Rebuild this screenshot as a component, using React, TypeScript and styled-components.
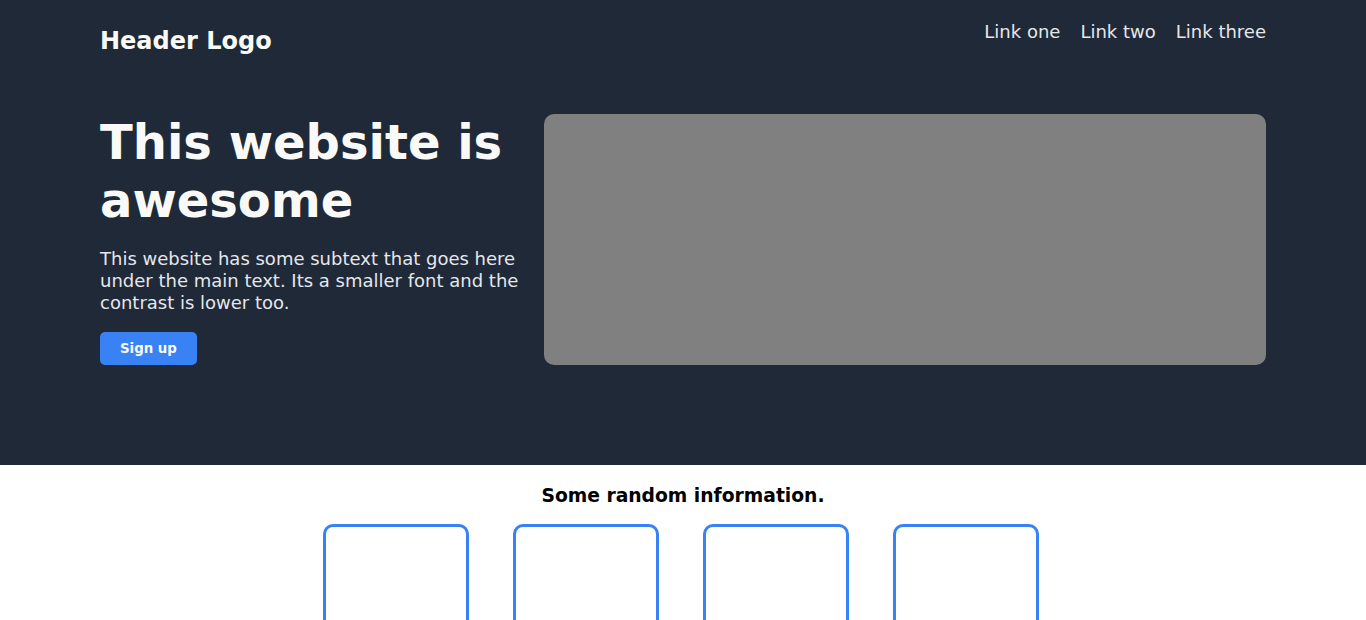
import React from "react";
import styled, { createGlobalStyle } from "styled-components";

const Global = createGlobalStyle`
  html, body { margin: 0; padding: 0; }
  body { font-family: "DejaVu Sans", sans-serif; background: #ffffff; }
  * { box-sizing: border-box; }
`;

const Hero = styled.section`
  background: #1f2937;
  padding: 0 100px 100px;
`;

const Header = styled.header`
  display: flex;
  justify-content: space-between;
  align-items: flex-start;
  padding-top: 21px;
`;

const Logo = styled.div`
  color: #f9faf8;
  font-size: 24px;
  font-weight: bold;
  margin-top: 6px;
`;

const Nav = styled.nav`
  display: flex;
  gap: 20px;
`;

const NavLink = styled.a`
  color: #e5e7eb;
  font-size: 18px;
  text-decoration: none;
`;

const HeroBody = styled.div`
  display: flex;
  gap: 24px;
  margin-top: 58px;
  align-items: flex-end;
`;

const TextCol = styled.div`
  width: 420px;
  flex-shrink: 0;
  display: flex;
  flex-direction: column;
  align-items: flex-start;
`;

const Title = styled.h1`
  margin: 0 0 19px;
  font-size: 48px;
  line-height: 58px;
  font-weight: bold;
  color: #f9faf8;
`;

const Sub = styled.p`
  margin: 0 0 18px;
  font-size: 18px;
  line-height: 22px;
  color: #e5e7eb;
`;

const Button = styled.button`
  background: #3882f6;
  color: #f9faf8;
  border: none;
  border-radius: 5px;
  font-family: inherit;
  font-size: 13.333px;
  font-weight: bold;
  padding: 0 20px;
  height: 33px;
`;

const Picture = styled.div`
  flex: 1;
  background: #808080;
  border-radius: 10px;
  height: 251px;
`;

const Info = styled.section`
  display: flex;
  flex-direction: column;
  align-items: center;
`;

const InfoTitle = styled.h3`
  margin: 19.72px 0 18.72px;
  font-size: 18.72px;
  font-weight: bold;
  color: #000;
`;

const Cards = styled.div`
  display: flex;
  gap: 44px;
  padding-right: 4px;
`;

const Card = styled.div`
  width: 146px;
  height: 150px;
  border: 3px solid #3882f6;
  border-radius: 10px;
`;

export default function App() {
  return (
    <>
      <Global />
      <Hero>
        <Header>
          <Logo>Header Logo</Logo>
          <Nav>
            <NavLink href="#">Link one</NavLink>
            <NavLink href="#">Link two</NavLink>
            <NavLink href="#">Link three</NavLink>
          </Nav>
        </Header>
        <HeroBody>
          <TextCol>
            <Title>This website is awesome</Title>
            <Sub>
              This website has some subtext that goes here under the main text. Its a smaller font and the contrast is lower too.
            </Sub>
            <Button>Sign up</Button>
          </TextCol>
          <Picture />
        </HeroBody>
      </Hero>
      <Info>
        <InfoTitle>Some random information.</InfoTitle>
        <Cards>
          <Card />
          <Card />
          <Card />
          <Card />
        </Cards>
      </Info>
    </>
  );
}
